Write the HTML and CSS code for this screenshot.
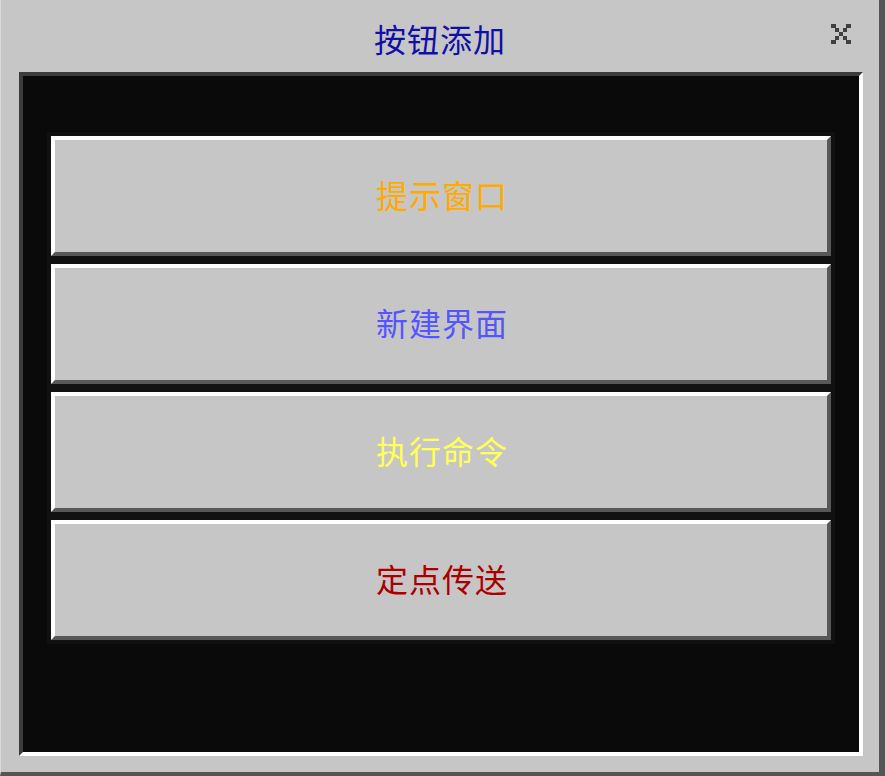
FILE: index.html
```html
<!DOCTYPE html>
<html lang="zh-CN">
<head>
<meta charset="utf-8">
<title>按钮添加</title>
<link rel="stylesheet" href="styles.css">
</head>
<body>
<div class="panel">
  <div class="titlebar">
    <span class="title">按钮添加</span>
    <span class="close" aria-label="关闭">
      <svg width="20" height="20" viewBox="0 0 20 20" shape-rendering="crispEdges">
        <g fill="#404040">
          <rect x="0" y="0" width="5" height="4"/>
          <rect x="15" y="0" width="5" height="4"/>
          <rect x="4" y="4" width="4" height="4"/>
          <rect x="12" y="4" width="4" height="4"/>
          <rect x="8" y="8" width="4" height="4"/>
          <rect x="4" y="12" width="4" height="4"/>
          <rect x="12" y="12" width="4" height="4"/>
          <rect x="0" y="16" width="5" height="4"/>
          <rect x="15" y="16" width="5" height="4"/>
        </g>
      </svg>
    </span>
  </div>
  <div class="inner">
    <div class="btn c-orange">提示窗口</div>
    <div class="btn c-blue">新建界面</div>
    <div class="btn c-yellow">执行命令</div>
    <div class="btn c-red">定点传送</div>
  </div>
</div>
</body>
</html>
```
FILE: styles.css
```css
html, body {
  margin: 0;
  padding: 0;
  background: #c6c6c6;
}
body {
  font-family: "Noto Sans CJK SC", "Noto Sans", sans-serif;
}
.panel {
  box-sizing: border-box;
  width: 885px;
  height: 776px;
  background: #c6c6c6;
  border-left: 1px solid #dadada;
  border-right: 6px solid #555555;
  border-bottom: 4px solid #555555;
  display: flex;
  flex-direction: column;
}
.titlebar {
  position: relative;
  height: 72px;
  display: flex;
  align-items: center;
  justify-content: center;
}
.title {
  font-size: 32px;
  line-height: 1;
  color: #1010a8;
  margin-top: 4px;
  letter-spacing: 1px;
}
.close {
  position: absolute;
  right: 28px;
  top: 24px;
  width: 20px;
  height: 20px;
  display: block;
}
.close svg {
  display: block;
}
.inner {
  box-sizing: border-box;
  margin: 0 16px 16px 18px;
  height: 684px;
  border-style: solid;
  border-width: 4px;
  border-color: #3c3c3c #ffffff #ffffff #3c3c3c;
  background: #0a0a0a;
  padding: 60px 28px 0 28px;
  display: flex;
  flex-direction: column;
  gap: 8px;
}
.btn {
  box-sizing: border-box;
  height: 120px;
  border-style: solid;
  border-width: 4px;
  border-color: #ffffff #585858 #585858 #ffffff;
  background: #c6c6c6;
  box-shadow: 0 0 0 4px #111111;
  display: flex;
  align-items: center;
  justify-content: center;
  padding-bottom: 4px;
  padding-left: 2px;
  font-size: 32px;
  line-height: 1;
  letter-spacing: 1px;
}
.c-orange { color: #ffaa00; }
.c-blue { color: #5555ff; }
.c-yellow { color: #ffff55; }
.c-red { color: #aa0000; }
```
